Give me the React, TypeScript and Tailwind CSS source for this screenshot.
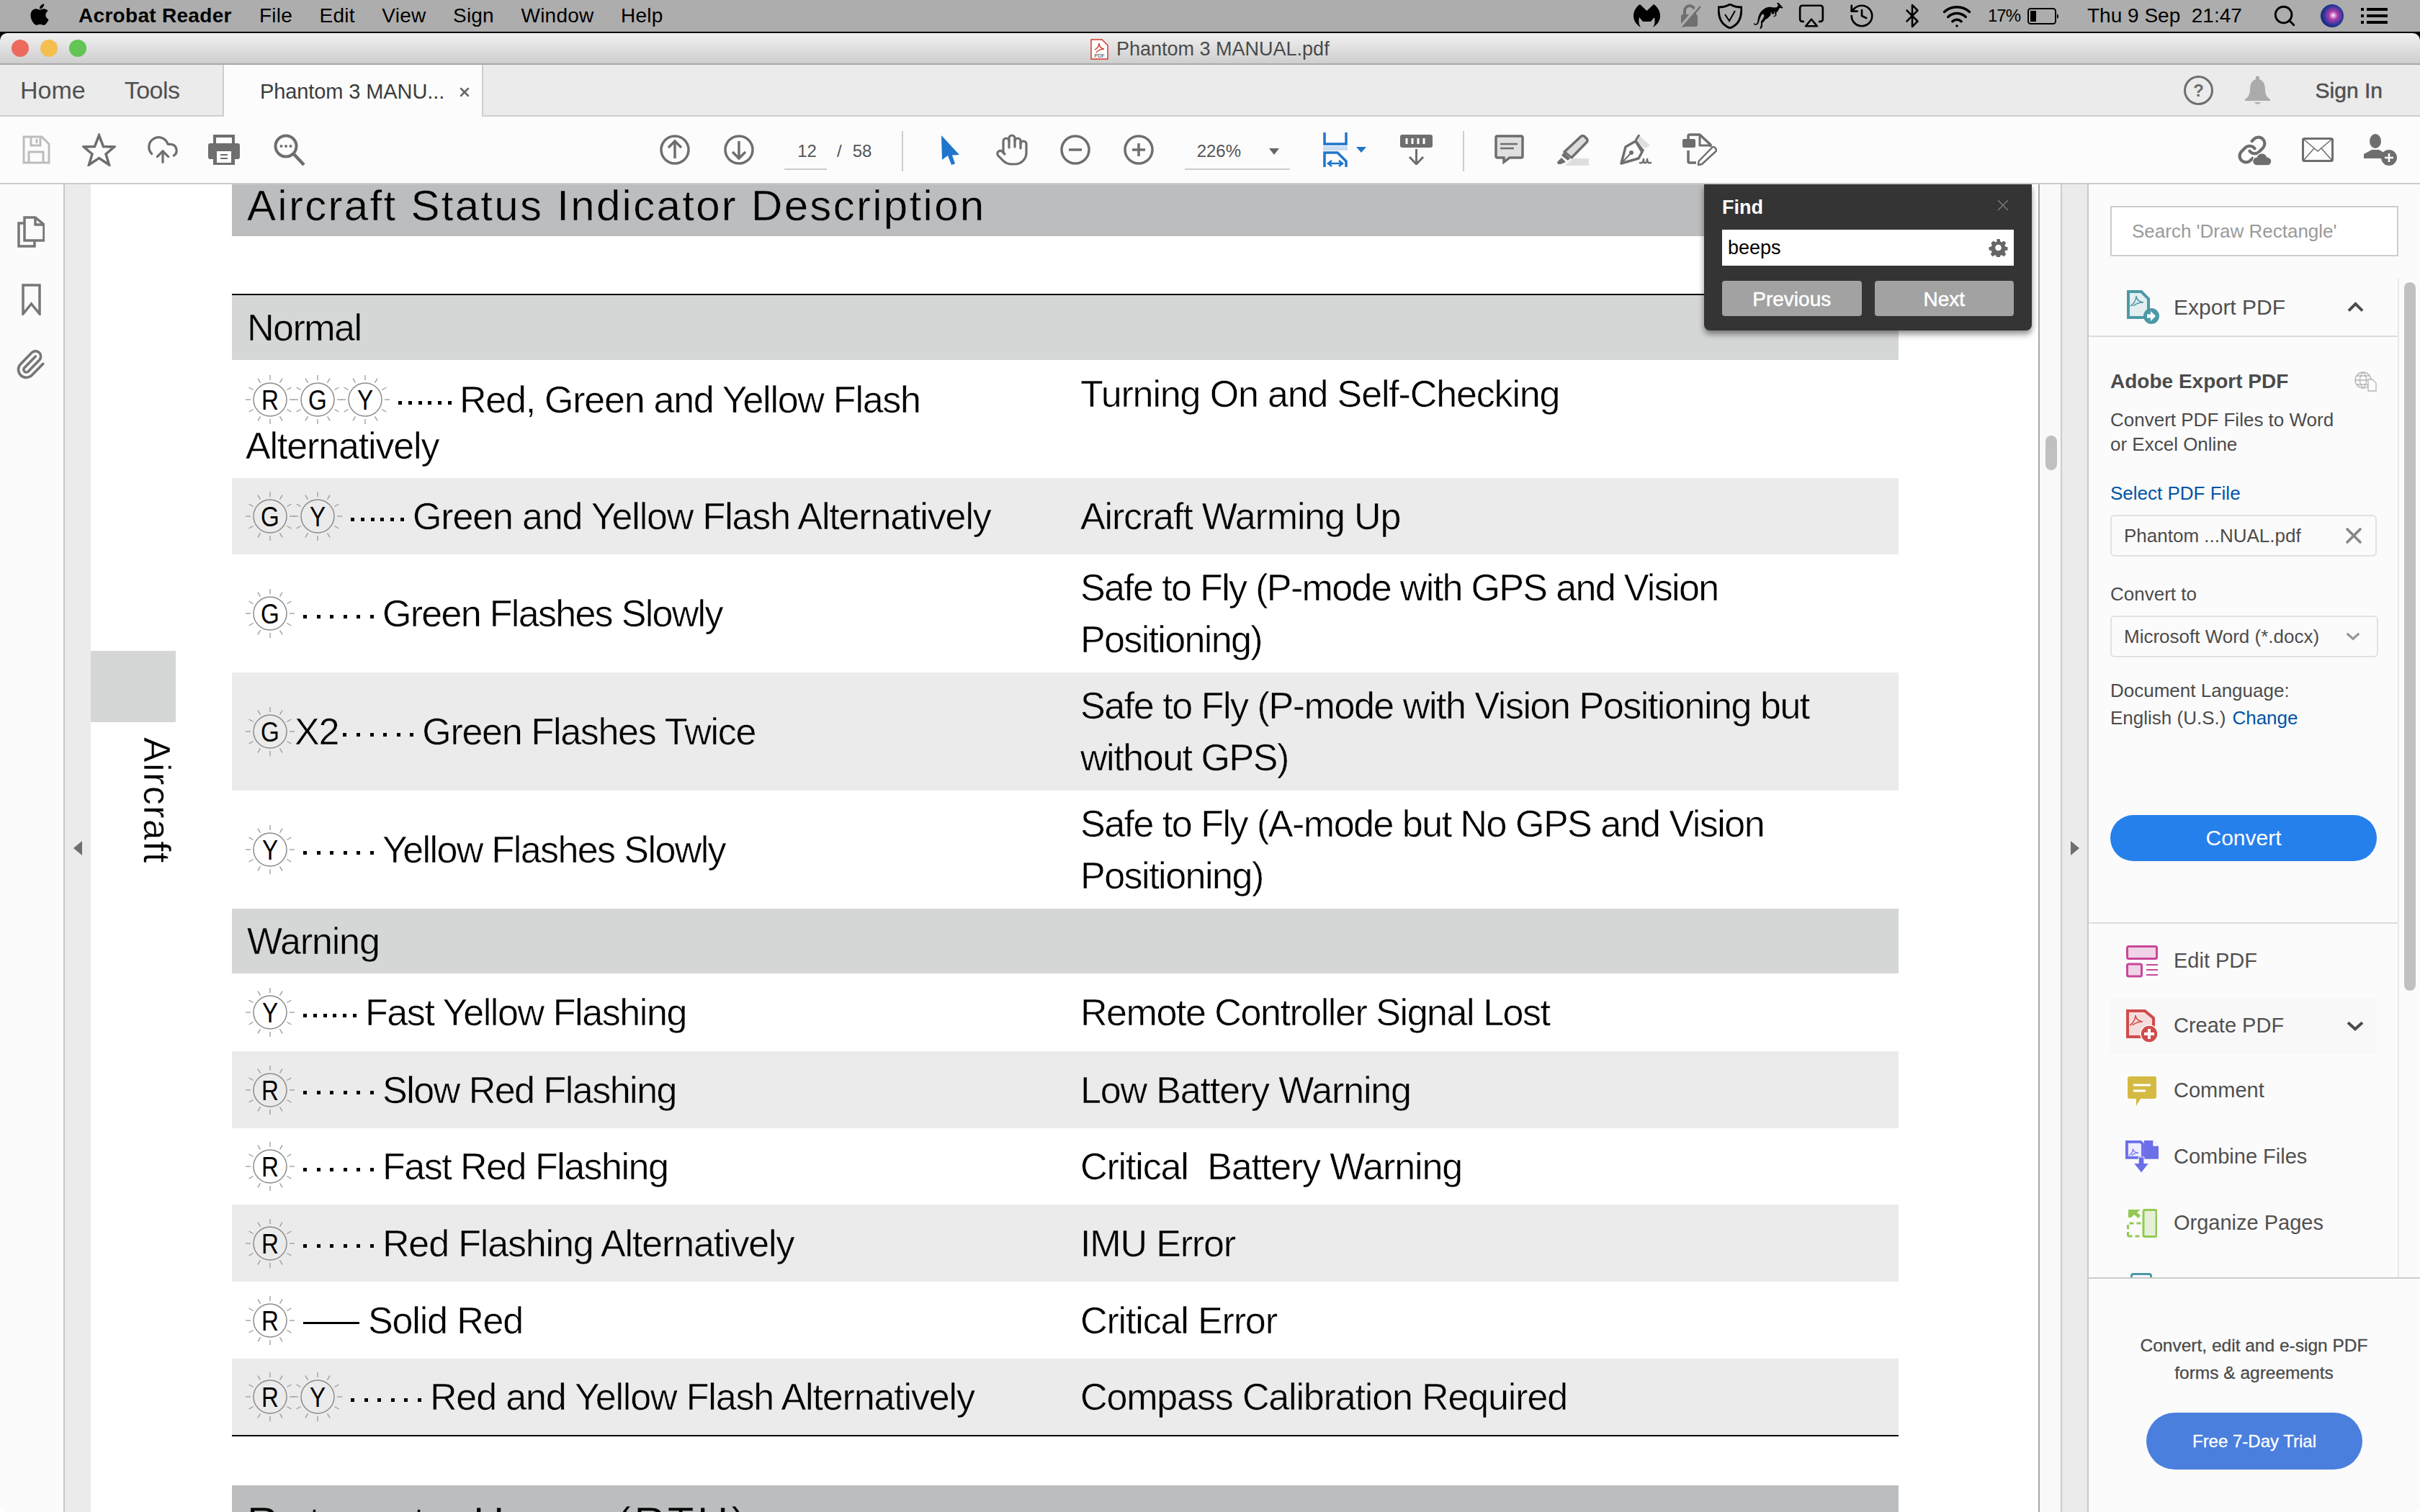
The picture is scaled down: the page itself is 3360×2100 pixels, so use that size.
import React from 'react';
import { Airplay, Bluetooth, CloudUpload, Hand, History, Link, Paperclip, Search, Wifi, X } from 'lucide-react';
import { FaApple } from 'react-icons/fa';
import { GiKangaroo } from 'react-icons/gi';

const G = '#6e6e6e';

// toolbar icons
const SaveIcon = () => (
  <svg width="40" height="40" viewBox="0 0 40 40" fill="none" stroke="#bdbdbd" strokeWidth="3">
    <path d="M3 2h25l10 10v26H3z" />
    <path d="M13 2v12h13V2M21 5v6M10 38V23h20v15" />
  </svg>
);
const StarIcon = () => (
  <svg width="47" height="46" viewBox="0 0 47 46" fill="none" stroke={G} strokeWidth="3.5" strokeLinejoin="miter">
    <path d="M23.5 3l6 15.5 15 .5-11.5 10 4.500 15-14-9.500-14 9.500 4.500-15-11.500-10 15-.5z" />
  </svg>
);
const PrintIcon = () => (
  <svg width="44" height="42" viewBox="0 0 44 42" fill="none">
    <path d="M9 12V2h26v10" stroke={G} strokeWidth="4" />
    <path d="M3 12h38a3 3 0 0 1 3 3v16a3 3 0 0 1-3 3h-4v8H7v-8H3a3 3 0 0 1-3-3V15a3 3 0 0 1 3-3z" fill={G} />
    <rect x="12" y="23" width="20" height="16" fill="#fcfcfc" />
    <path d="M17 28h10M17 33h10" stroke={G} strokeWidth="2" />
  </svg>
);
const FindIcon = () => (
  <svg width="44" height="44" viewBox="0 0 44 44" fill="none" stroke={G}>
    <circle cx="17" cy="17" r="14.500" strokeWidth="4" />
    <path d="M27 27l15 16" strokeWidth="4.500" />
    <circle cx="10.500" cy="17" r="2" fill={G} stroke="none" />
    <circle cx="17" cy="17" r="2" fill={G} stroke="none" />
    <circle cx="23.500" cy="17" r="2" fill={G} stroke="none" />
  </svg>
);
const CircleIcon = ({ d }: { d: string }) => (
  <svg width="42" height="42" viewBox="0 0 42 42" fill="none" stroke={G}>
    <circle cx="21" cy="21" r="19" strokeWidth="3.500" />
    <path d={d} strokeWidth="3.500" />
  </svg>
);
const ArrowIcon = () => (
  <svg width="25" height="41" viewBox="0 0 25 41">
    <path d="M0 0l25 27-10 .5 4 12-5 1.500-5-13-8 6z" fill="#1f75cb" />
  </svg>
);
const FitIcon = () => (
  <svg width="34" height="48" viewBox="0 0 34 48" fill="none" stroke="#1f75cb" strokeWidth="3.500">
    <path d="M2 0v16h30V0" />
    <rect x="0" y="19" width="34" height="6" fill="#c9dcf2" stroke="none" />
    <path d="M2 48V28h18l12 12v8" />
    <path d="M8 43h18M12 39l-5 4 5 4M22 39l5 4-5 4" strokeWidth="2.500" />
  </svg>
);
const MeasureIcon = () => (
  <svg width="45" height="42" viewBox="0 0 45 42" fill="none">
    <rect width="45" height="18" rx="3" fill={G} />
    <path d="M9 5v8M17 5v8M25 5v8M33 5v8" stroke="#fff" strokeWidth="3" />
    <path d="M22.500 20v21M13 31l9.500 10 9.500-10" stroke={G} strokeWidth="3" />
  </svg>
);
const CommentIcon = () => (
  <svg width="41" height="42" viewBox="0 0 41 42">
    <path d="M4 2h33a2 2 0 0 1 2 2v26a2 2 0 0 1-2 2H21l-8 6v-6H4a2 2 0 0 1-2-2V4a2 2 0 0 1 2-2z" fill="#e0e0e0" stroke={G} strokeWidth="3.500" />
    <path d="M8 13h24M8 19h19" stroke={G} strokeWidth="2.500" />
  </svg>
);
const HighlightIcon = () => (
  <svg width="45" height="44" viewBox="0 0 45 44">
    <path d="M12 44l11-10h22v10z" fill="#dedede" />
    <path d="M34 3.500a3.500 3.500 0 0 1 5 0l3 3a3.500 3.500 0 0 1 0 5L21 33l-10-8z" fill="#dcdcdc" stroke={G} strokeWidth="3.500" strokeLinejoin="round" />
    <path d="M10 26l9 8-3 3-9-7z" fill={G} />
    <path d="M1 39l6-6 6 6-7 3H2z" fill={G} />
  </svg>
);
const SignIcon = () => (
  <svg width="46" height="43" viewBox="0 0 46 43" fill="none" stroke={G} strokeWidth="3.500" strokeLinejoin="round">
    <path d="M27 1l15 14-7 4-14-12z" fill="#dedede" stroke="none" />
    <path d="M27 0l-5 8" strokeWidth="3" />
    <path d="M2 40L8 17l14-8 9 15-5 9z" />
    <path d="M22 9l11 14" />
    <circle cx="16" cy="25" r="3" fill={G} stroke="none" />
    <path d="M2 40l14-15" strokeWidth="2" />
    <path d="M28 39c3 1 5-1 5-5 0 4 0 6 3 5 2-1 2-3 2-5 0 4 1 6 5 5" strokeWidth="2.500" strokeLinecap="round" />
  </svg>
);
const EditDocIcon = () => (
  <svg width="48" height="46" viewBox="0 0 48 46" fill="none" stroke={G} strokeWidth="3.500" strokeLinejoin="round">
    <rect x="0" y="8" width="18" height="12" rx="2" fill={G} stroke="none" />
    <path d="M8 8V4a2 2 0 0 1 2-2h14l15 14v3" />
    <path d="M24 2v15h15" strokeWidth="3" />
    <path d="M8 24v15a2 2 0 0 0 2 2h9" />
    <path d="M41 20a2.500 2.500 0 0 1 4 0l1.500 2a2.500 2.500 0 0 1 0 3L27 43l-5 1 .5-5z" strokeWidth="2.500" />
  </svg>
);
const LinkCloudIcon = () => (
  <div className="relative w-[48px] h-[43px]">
    <Link size={42} strokeWidth={2.400} color={G} className="absolute left-0 top-0" />
    <svg className="absolute right-0 bottom-0" width="26" height="20" viewBox="0 0 26 20">
      <path d="M6 20a6 6 0 0 1-1-12 8 8 0 0 1 15 0 6 6 0 0 1 0 12z" fill={G} stroke="#fcfcfc" strokeWidth="1.500" />
    </svg>
  </div>
);
const MailIcon = () => (
  <svg width="44" height="34" viewBox="0 0 44 34" fill="none" stroke={G}>
    <rect x="1.500" y="1.500" width="41" height="31" rx="2" strokeWidth="3" />
    <path d="M2 2l20 17L42 2M2 32l15-17M42 32L27 15" strokeWidth="1.500" />
  </svg>
);
const UserPlusIcon = () => (
  <svg width="47" height="45" viewBox="0 0 47 45">
    <ellipse cx="16" cy="10" rx="8" ry="10" fill={G} />
    <path d="M0 34v-6l11-6h10l9 5v7z" fill={G} />
    <circle cx="35" cy="33" r="11" fill={G} />
    <path d="M35 27v12M29 33h12" stroke="#fff" strokeWidth="2.500" />
  </svg>
);

// menu bar icons
const MalwareIcon = () => (
  <svg width="37" height="32" viewBox="0 0 37 32">
    <path d="M9 0l9.500 9L28 0c6 4 9 10 9 16 0 7-4 12-10 16 3-5 3-9 2-14l-5 6h-11l-5-6c-1 5-1 9 2 14C4 28 0 23 0 16 0 10 3 4 9 0z" fill="#000" />
  </svg>
);
const LockOffIcon = () => (
  <svg width="31" height="32" viewBox="0 0 31 32" fill="none">
    <rect x="3" y="14" width="23" height="17" rx="3" fill="#6f6f6f" />
    <path d="M8 14V9a7 7 0 0 1 14 0v5" stroke="#6f6f6f" strokeWidth="4" />
    <path d="M29 1L3 31" stroke="#adadad" strokeWidth="5" />
    <path d="M30 3L5 32" stroke="#6f6f6f" strokeWidth="2.500" />
  </svg>
);
const ShieldIcon = () => (
  <svg width="34" height="35" viewBox="0 0 34 35" fill="none" stroke="#000" strokeWidth="2">
    <path d="M17 1c5 3 10 4 16 4 0 14-3 24-16 29C4 29 1 19 1 5c6 0 11-1 16-4z" strokeWidth="3" />
    <path d="M10 15l6 9 8-14" />
  </svg>
);
const BatteryIcon = () => (
  <svg width="44" height="23" viewBox="0 0 44 23" fill="none">
    <rect x="1" y="1" width="38" height="21" rx="3.500" stroke="#000" strokeWidth="2" />
    <rect x="4" y="4" width="8" height="15" fill="#000" />
    <path d="M41 8a4 4 0 0 1 0 7z" fill="#000" />
  </svg>
);
const SiriIcon = () => (
  <div className="w-[32px] h-[32px] rounded-full bg-[radial-gradient(circle_at_55%_48%,#f2f2ff_0%,#b43ca8_24%,#27379c_56%,#070a24_100%)]" />
);
const ListIcon = () => (
  <svg width="37" height="22" viewBox="0 0 37 22" fill="#000">
    <rect x="0" y="0" width="4" height="4" />
    <rect x="0" y="9" width="4" height="4" />
    <rect x="0" y="18" width="4" height="4" />
    <rect x="8" y="0" width="29" height="4" />
    <rect x="8" y="9" width="29" height="4" />
    <rect x="8" y="18" width="29" height="4" />
  </svg>
);
const PdfFileIcon = () => (
  <svg width="25" height="29" viewBox="0 0 25 29" fill="#fff" stroke="#d8372c">
    <path d="M1 1h15l8 8v19H1z" strokeWidth="1.500" />
    <path d="M6 15c3-1 6-5 6-9 0 4 3 8 7 8-4 0-9 2-11 5" fill="none" strokeWidth="1.500" />
    <text x="12.500" y="26" textAnchor="middle" fontSize="7" stroke="none" fill="#333" fontFamily="Liberation Sans">PDF</text>
  </svg>
);

// side panel icons
const Squiggle = ({ c }: { c: string }) => (
  <path d="M5 22c4-2 8-8 8-14 0 5 5 9 10 9-5 0-10 1-14 5" fill="none" stroke={c} strokeWidth="1.500" />
);
const ExportIcon = () => (
  <svg width="45" height="47" viewBox="0 0 45 47">
    <path d="M2 2h18l10 10v26H2z" fill="#e3eef0" stroke="#4c99a6" strokeWidth="4" />
    <Squiggle c="#4c99a6" />
    <circle cx="34" cy="36" r="11" fill="#4c99a6" />
    <path d="M28 33.500h5V29l7 7-7 7v-4.500h-5z" fill="#fff" />
  </svg>
);
const EditIcon = () => (
  <svg width="44" height="45" viewBox="0 0 44 45" fill="none" stroke="#c8479b" strokeWidth="3">
    <rect x="1.500" y="1.500" width="41" height="17" rx="2" fill="#f0d3e6" />
    <rect x="1.500" y="26" width="20" height="17" rx="2" fill="#f0d3e6" />
    <path d="M28 27h16M28 34h16M28 41h16" strokeWidth="2" />
  </svg>
);
const CreateIcon = () => (
  <svg width="44" height="46" viewBox="0 0 44 46">
    <path d="M2 2h24l12 10v26H2z" fill="#f5dddd" stroke="#d14b4b" strokeWidth="4" />
    <Squiggle c="#d14b4b" />
    <circle cx="32" cy="34" r="12" fill="#d14b4b" stroke="#fbfbfb" strokeWidth="1.500" />
    <path d="M32 27v14M25 34h14" stroke="#fff" strokeWidth="4" />
  </svg>
);
const NoteIcon = () => (
  <svg width="40" height="41" viewBox="0 0 40 41">
    <path d="M3 0h34a3 3 0 0 1 3 3v25a3 3 0 0 1-3 3H18l-6 10V31H3a3 3 0 0 1-3-3V3a3 3 0 0 1 3-3z" fill="#d4ba42" />
    <path d="M8 12h24M8 20h17" stroke="#fff" strokeWidth="3" />
  </svg>
);
const CombineIcon = () => (
  <svg width="48" height="47" viewBox="0 0 48 47">
    <path d="M2 2h20l3 3v20H2z" fill="#eef" stroke="#6b6fe8" strokeWidth="4" />
    <path d="M5 22c3-2 6-5 6-10 0 4 4 6 8 6-4 0-7 1-10 4" fill="none" stroke="#6b6fe8" strokeWidth="1.300" />
    <path d="M27 0h13l8 8v19H27z" fill="#6b6fe8" />
    <path d="M40 0l8 8h-8z" fill="#fbfbfb" />
    <path d="M19 24h8v9h7l-11 14-11-14h7z" fill="#6b6fe8" stroke="#fbfbfb" strokeWidth="1" />
  </svg>
);
const OrganizeIcon = () => (
  <svg width="42" height="40" viewBox="0 0 42 40" fill="none">
    <rect x="23" y="1.500" width="18" height="37" rx="2" fill="#e6f0d8" stroke="#93c955" strokeWidth="3" />
    <path d="M1.500 38v-18h18M1.500 38h18" stroke="#93c955" strokeWidth="3" strokeDasharray="6 4" />
    <path d="M2 1h17l-5 4 5 4-3 4-6-5-4 4H2z" fill="#93c955" />
  </svg>
);
const GlobeDocIcon = () => (
  <svg width="31" height="28" viewBox="0 0 31 28" fill="none" stroke="#b5b5b5" strokeWidth="1.300">
    <circle cx="12" cy="12" r="11" />
    <path d="M1 12h22M12 1c-6 6-6 16 0 22M12 1c6 6 6 16 0 22M3 6h18M3 18h18" />
    <path d="M19 11h6l5 5v11H19z" fill="#fbfbfb" />
  </svg>
);
const GearIcon = () => (
  <svg width="29" height="26" viewBox="0 0 24 24" fill="#666">
    <path d="M10 1h4l.6 3.200 1.900.8 2.700-1.800 2.800 2.800-1.800 2.700.8 1.900 3 .6v4l-3 .6-.8 1.900 1.800 2.700-2.800 2.800-2.700-1.800-1.900.8-.6 3h-4l-.6-3-1.900-.8-2.700 1.800-2.800-2.800 1.800-2.700-.8-1.900-3-.6v-4l3-.6.8-1.900L2.800 6l2.800-2.800 2.700 1.800 1.900-.8zM12 8a4 4 0 1 0 0 8 4 4 0 0 0 0-8z" fillRule="evenodd" />
  </svg>
);
const Chevron = ({ up, color, w }: { up?: boolean; color: string; w: number }) => (
  <svg width={w} height={w * 0.6} viewBox="0 0 24 14" fill="none" stroke={color} strokeWidth="4">
    <path d={up ? 'M2 13L12 3l10 10' : 'M2 2l10 9 10-9'} />
  </svg>
);

// status light with rays, as printed in the manual
const Led = ({ letter }: { letter: string }) => (
  <svg width="68" height="68" viewBox="0 0 68 68" className="shrink-0 -mr-[2px]">
    {Array.from({ length: 12 }).map((_, i) => {
      const a = (i * Math.PI) / 6;
      return (
        <line key={i} x1={34 + 27 * Math.cos(a)} y1={34 + 27 * Math.sin(a)} x2={34 + 34 * Math.cos(a)} y2={34 + 34 * Math.sin(a)} stroke="#9a9a9a" strokeWidth="1.300" />
      );
    })}
    <circle cx="34" cy="34" r="23" fill="none" stroke="#8c8c8c" strokeWidth="1.500" />
    <text transform="translate(34 48) scale(0.85 1)" textAnchor="middle" fontSize="39" fontFamily="Liberation Sans" fontWeight="400" fill="#000">{letter}</text>
  </svg>
);

const Dots = ({ wide }: { wide?: boolean }) => (
  <div className={`flex shrink-0 ml-[14px] mt-[8px] mr-[12px] ${wide ? 'gap-[13.600px]' : 'gap-[8.800px]'}`}>
    {[0, 1, 2, 3, 4, 5].map((i) => (
      <div key={i} className="w-[5px] h-[5px] bg-black" />
    ))}
  </div>
);

const thin = "font-['Liberation_Sans',sans-serif] text-[52px] leading-[72px] text-black";
const baseTrack = 'tracking-[-1.150px]';
const onWhite = '[-webkit-text-stroke:0.5px_#ffffff]';
const onAlt = '[-webkit-text-stroke:0.5px_#ebebeb]';
const onBand = '[-webkit-text-stroke:0.5px_#d5d7d6]';
const onTitle = '[-webkit-text-stroke:0.5px_#bcbdbf]';

interface RowProps {
  h: string;
  alt?: boolean;
  leds: string[];
  mark: 'tight' | 'wide' | 'solid';
  x2?: boolean;
  label: string;
  right: string[];
  labelTrack?: string;
  rightTrack?: string;
}

function Row({ h, alt, leds, mark, x2, label, right, labelTrack = baseTrack, rightTrack = baseTrack }: RowProps) {
  const stroke = alt ? onAlt : onWhite;
  return (
    <div className={`flex items-center ${h} ${alt ? 'bg-[#ebebeb]' : ''}`}>
      <div className="w-[1178px] pl-[19px] flex items-center">
        {leds.map((l, i) => (
          <Led key={i} letter={l} />
        ))}
        {x2 && <span className={`${thin} ${baseTrack} ${stroke} ml-[2px] -mr-[8px]`}>X2</span>}
        {mark === 'solid' ? <div className="w-[78px] h-[3px] bg-black ml-[14px] mr-[12px] mt-[8px]" /> : <Dots wide={mark === 'wide'} />}
        <span className={`${thin} ${labelTrack} ${stroke}`}>{label}</span>
      </div>
      <div className={`${thin} ${rightTrack} ${stroke} whitespace-pre`}>
        {right.map((r) => (
          <div key={r}>{r}</div>
        ))}
      </div>
    </div>
  );
}

const menuItems = [
  { label: 'Edit PDF', h: 'h-[90px]', icon: <EditIcon /> },
  { label: 'Create PDF', h: 'h-[90px]', icon: <CreateIcon />, hover: true },
  { label: 'Comment', h: 'h-[90px]', icon: <NoteIcon /> },
  { label: 'Combine Files', h: 'h-[93px]', icon: <CombineIcon /> },
  { label: 'Organize Pages', h: 'h-[91px]', icon: <OrganizeIcon /> },
];

export default function App() {
  return (
    <div className="relative w-[3360px] h-[2100px] overflow-hidden bg-black flex flex-col font-['Liberation_Sans',Arial,sans-serif] text-[#4b4b4b]">
      {/* mac menu bar */}
      <div className="h-[44px] shrink-0 bg-[#adadad] flex items-center text-[28px] text-black">
        <FaApple size={34} className="ml-[38px] -mt-[4px]" />
        <span className="ml-[37px] font-bold w-[214px] whitespace-nowrap tracking-[0.3px]">Acrobat Reader</span>
        <div className="flex gap-[37.700px] ml-[37px] tracking-[0.2px]">
          {['File', 'Edit', 'View', 'Sign', 'Window', 'Help'].map((m) => (
            <span key={m}>{m}</span>
          ))}
        </div>
        <div className="ml-auto flex items-center pr-[45px]">
          <MalwareIcon />
          <div className="ml-[26px]"><LockOffIcon /></div>
          <div className="ml-[23px]"><ShieldIcon /></div>
          <GiKangaroo size={44} className="ml-[14px]" />
          <Airplay size={38} strokeWidth={1.700} className="ml-[19px]" />
          <History size={38} strokeWidth={1.700} className="ml-[32px]" />
          <Bluetooth size={36} strokeWidth={1.700} className="ml-[33px]" />
          <Wifi size={42} strokeWidth={2} className="ml-[23px]" />
          <span className="ml-[22px] text-[24px] tracking-[-1px]">17%</span>
          <div className="ml-[10px]"><BatteryIcon /></div>
          <span className="ml-[39px] w-[217px]">Thu 9 Sep&nbsp; 21:47</span>
          <Search size={34} strokeWidth={2} className="ml-[40px]" />
          <div className="ml-[33px]"><SiriIcon /></div>
          <div className="ml-[24px]"><ListIcon /></div>
        </div>
      </div>
      <div className="h-[2px] shrink-0 bg-black" />

      {/* window title */}
      <div className="relative h-[44px] shrink-0 rounded-t-[10px] border-b-2 border-[#a9a9a9] bg-gradient-to-b from-[#f1f1f1] to-[#cecece] flex items-center">
        <div className="flex gap-[16px] ml-[16px]">
          <div className="w-[24px] h-[24px] rounded-full bg-[#ec6a5e]" />
          <div className="w-[24px] h-[24px] rounded-full bg-[#f5bf4f]" />
          <div className="w-[24px] h-[24px] rounded-full bg-[#62c554]" />
        </div>
        <div className="ml-[1394px] flex items-center gap-[11px] text-[27px] text-[#4a4a4a] pt-[2px]">
          <PdfFileIcon />
          <span>Phantom 3 MANUAL.pdf</span>
        </div>
      </div>

      {/* tab bar */}
      <div className="h-[72px] shrink-0 bg-[#ebebeb] border-b-2 border-[#cecece] flex items-start">
        <div className="w-[309px] h-[70px] flex items-center gap-[54px] pl-[28px] text-[34px] text-[#505050]">
          <span>Home</span>
          <span className="tracking-[-0.5px]">Tools</span>
        </div>
        <div className="w-[362px] h-[72px] bg-[#fcfcfc] border-x-2 border-[#cecece] flex items-center pl-[50px] pt-[4px] text-[29px] text-[#3c3c3c] z-10">
          <span className="w-[274px] tracking-[-0.1px]">Phantom 3 MANU...</span>
          <X size={20} strokeWidth={3} color="#666" />
        </div>
        <div className="ml-auto h-[70px] flex items-center pr-[52px]">
          <svg width="41" height="41" viewBox="0 0 41 41" fill="none">
            <circle cx="20.500" cy="20.500" r="19" stroke={G} strokeWidth="3" />
            <text x="20.500" y="29" textAnchor="middle" fontSize="24" fontWeight="700" fill={G} fontFamily="Liberation Sans">?</text>
          </svg>
          <svg width="35" height="39" viewBox="0 0 35 39" className="ml-[44px]" fill="#ababab">
            <path d="M15 0h5v4c6 2 8 8 8 14 0 6 2 11 7 14v2H0v-2c5-3 7-8 7-14 0-6 2-12 8-14z" />
            <path d="M12 36h11l-5.500 3z" />
          </svg>
          <span className="ml-[63px] text-[30px] text-[#505050] [-webkit-text-stroke:0.5px_#505050]">Sign In</span>
        </div>
      </div>

      {/* toolbar */}
      <div className="h-[94px] shrink-0 bg-[#fcfcfc] border-b-2 border-[#cccccc] flex items-center pl-[30px] pr-[31px]">
        <SaveIcon />
        <div className="ml-[44px]"><StarIcon /></div>
        <CloudUpload size={46} strokeWidth={1.700} color={G} className="ml-[42px]" />
        <div className="ml-[40px]"><PrintIcon /></div>
        <div className="ml-[47px]"><FindIcon /></div>
        <div className="ml-[492px]"><CircleIcon d="M21 33V10M12 18l9-9 9 9" /></div>
        <div className="ml-[47px]"><CircleIcon d="M21 9v23M12 24l9 9 9-9" /></div>
        <div className="ml-[42px] w-[59px] h-[50px] mt-[6px] border-b-2 border-[#cccccc] flex items-center justify-center pl-[4px] text-[24px] text-[#555]">12</div>
        <span className="ml-[14px] mt-[4px] text-[24px] text-[#555]">/</span>
        <span className="ml-[15px] mt-[4px] text-[24px] text-[#555] w-[26px]">58</span>
        <div className="ml-[42px] w-[2px] h-[56px] bg-[#cccccc] mt-[4px]" />
        <div className="ml-[53px]"><ArrowIcon /></div>
        <Hand size={48} strokeWidth={1.600} color={G} className="ml-[49px]" />
        <div className="ml-[43px]"><CircleIcon d="M12 21h18" /></div>
        <div className="ml-[46px]"><CircleIcon d="M12 21h18M21 12v18" /></div>
        <div className="ml-[43px] w-[146px] h-[50px] mt-[6px] border-b-2 border-[#cccccc] flex items-center pl-[17px] text-[24px] text-[#555]">
          <span className="w-[100px]">226%</span>
          <div className="w-0 h-0 border-x-[7px] border-x-transparent border-t-[9px] border-t-[#666]" />
        </div>
        <div className="ml-[46px]"><FitIcon /></div>
        <div className="ml-[12px] w-0 h-0 border-x-[7px] border-x-transparent border-t-[8px] border-t-[#1f75cb]" />
        <div className="ml-[47px]"><MeasureIcon /></div>
        <div className="ml-[42px] w-[2px] h-[56px] bg-[#cccccc] mt-[4px]" />
        <div className="ml-[42px]"><CommentIcon /></div>
        <div className="ml-[45px]"><HighlightIcon /></div>
        <div className="ml-[43px]"><SignIcon /></div>
        <div className="ml-[41px]"><EditDocIcon /></div>
        <div className="ml-auto"><LinkCloudIcon /></div>
        <div className="ml-[42px]"><MailIcon /></div>
        <div className="ml-[42px]"><UserPlusIcon /></div>
      </div>

      <div className="flex-1 flex min-h-0 bg-white">
        {/* left rail */}
        <div className="w-[90px] shrink-0 border-r-2 border-[#c8c8c8] bg-[#fbfbfb] rounded-bl-[10px] flex flex-col items-center pt-[44px] pr-[2px]">
          <svg width="38" height="44" viewBox="0 0 38 44" fill="none" stroke="#777" strokeWidth="3.500">
            <path d="M10 34V2h15l12 10v22z" />
            <path d="M25 2v10h12" />
            <path d="M10 10H2v32h22v-8" />
          </svg>
          <svg width="27" height="44" viewBox="0 0 27 44" className="mt-[50px]" fill="none" stroke="#777" strokeWidth="3.500">
            <path d="M2 2h23v40L13.500 28 2 42z" />
          </svg>
          <Paperclip size={44} strokeWidth={2} color="#777" className="mt-[46px] -ml-[2px]" />
        </div>
        {/* gutter */}
        <div className="w-[36px] shrink-0 bg-[#ebebeb] flex items-center justify-center">
          <div className="w-0 h-0 border-y-[10px] border-y-transparent border-r-[12px] border-r-[#6e6e6e]" />
        </div>

        {/* pdf page */}
        <div className="relative w-[2704px] shrink-0 bg-white flex overflow-hidden">
          <div className="w-[196px] shrink-0 pt-[648px]">
            <div className="w-[118px] h-[99px] bg-[#d5d7d6]" />
            <div className={`mt-[21px] ml-[62px] [writing-mode:vertical-rl] text-[52px] leading-[60px] tracking-[1.400px] text-black ${onWhite}`}>Aircraft</div>
          </div>
          <div className="w-[2314px] shrink-0">
            <div className={`h-[72px] bg-[#bcbdbf] pl-[21px] pb-[12px] flex items-center text-[60px] leading-[60px] tracking-[2.300px] text-black ${onTitle}`}>Aircraft Status Indicator Description</div>
            <div className="h-[80px]" />
            <div className="h-[2px] bg-black" />
            <div className={`h-[90px] bg-[#d5d7d6] pl-[21px] flex items-center ${thin} tracking-[-1.500px] ${onBand}`}>Normal</div>

            {/* first row wraps on two lines */}
            <div className="h-[164px] flex">
              <div className="w-[1178px] pl-[19px] pt-[19px]">
                <div className="flex items-center">
                  <Led letter="R" />
                  <Led letter="G" />
                  <Led letter="Y" />
                  <Dots />
                  <span className={`${thin} tracking-[-1.250px] ${onWhite} -ml-[1px]`}>Red, Green and Yellow Flash</span>
                </div>
                <div className={`${thin} ${baseTrack} ${onWhite} -mt-[8px] leading-[66px]`}>Alternatively</div>
              </div>
              <div className={`${thin} ${baseTrack} ${onWhite} pt-[11px]`}>Turning On and Self-Checking</div>
            </div>
            <Row h="h-[106px]" alt leds={['G', 'Y']} mark="tight" label="Green and Yellow Flash Alternatively" right={['Aircraft Warming Up']} />
            <Row h="h-[164px]" leds={['G']} mark="wide" label="Green Flashes Slowly" labelTrack="tracking-[-1.700px]" right={['Safe to Fly (P-mode with GPS and Vision', 'Positioning)']} rightTrack="tracking-[-1.650px]" />
            <Row h="h-[164px]" alt leds={['G']} x2 mark="wide" label="Green Flashes Twice" labelTrack="tracking-[-1.300px]" right={['Safe to Fly (P-mode with Vision Positioning but', 'without GPS)']} rightTrack="tracking-[-1.450px]" />
            <Row h="h-[164px]" leds={['Y']} mark="wide" label="Yellow Flashes Slowly" labelTrack="tracking-[-1.600px]" right={['Safe to Fly (A-mode but No GPS and Vision', 'Positioning)']} rightTrack="tracking-[-1.500px]" />
            <div className={`h-[90px] bg-[#d5d7d6] pl-[21px] flex items-center ${thin} ${baseTrack} ${onBand}`}>Warning</div>
            <Row h="h-[108px]" leds={['Y']} mark="tight" label="Fast Yellow Flashing" labelTrack="tracking-[-1.400px]" right={['Remote Controller Signal Lost']} rightTrack="tracking-[-1.450px]" />
            <Row h="h-[107px]" alt leds={['R']} mark="wide" label="Slow Red Flashing" labelTrack="tracking-[-1.500px]" right={['Low Battery Warning']} />
            <Row h="h-[106px]" leds={['R']} mark="wide" label="Fast Red Flashing" labelTrack="tracking-[-1.500px]" right={['Critical  Battery Warning']} />
            <Row h="h-[107px]" alt leds={['R']} mark="wide" label="Red Flashing Alternatively" right={['IMU Error']} />
            <Row h="h-[107px]" leds={['R']} mark="solid" label="Solid Red" right={['Critical Error']} />
            <Row h="h-[106px]" alt leds={['R', 'Y']} mark="wide" label="Red and Yellow Flash Alternatively" right={['Compass Calibration Required']} />
            <div className="h-[2px] bg-black" />
            <div className="h-[68px]" />
            <div className={`h-[80px] bg-[#bcbdbf] pl-[21px] pt-[16px] text-[60px] leading-[72px] tracking-[4.400px] text-black whitespace-nowrap ${onTitle}`}>Return-to-Home (RTH)</div>
          </div>

          {/* find dialog */}
          <div className="absolute left-[2240px] top-0 w-[455px] h-[203px] bg-[#343434] rounded-b-[8px] shadow-[0_5px_9px_rgba(0,0,0,0.45)] px-[25px] flex flex-col">
            <div className="h-[63px] flex items-center justify-between pt-[1px]">
              <span className="text-[27px] font-bold text-white">Find</span>
              <X size={26} strokeWidth={1.500} color="#777" className="mr-[2px] -mt-[6px]" />
            </div>
            <div className="h-[50px] bg-white flex items-center justify-between pl-[8px] pr-[7px] text-[27px] text-black">
              <span>beeps</span>
              <GearIcon />
            </div>
            <div className="flex gap-[18px] mt-[21px]">
              <div className="flex-1 h-[49px] rounded-[4px] bg-[#a2a2a2] flex items-center justify-center pt-[2px] text-[28px] text-white [-webkit-text-stroke:0.5px_#ffffff]">Previous</div>
              <div className="flex-1 h-[49px] rounded-[4px] bg-[#a2a2a2] flex items-center justify-center pt-[2px] text-[28px] text-white [-webkit-text-stroke:0.5px_#ffffff]">Next</div>
            </div>
          </div>
        </div>

        {/* page scrollbar */}
        <div className="relative w-[33px] shrink-0 bg-[#f9f9f9] border-l-2 border-[#a8a8a8] border-r-2 border-r-[#cccccc]">
          <div className="absolute left-[8px] top-[349px] w-[16px] h-[48px] rounded-[8px] bg-[#c0c0c0]" />
        </div>
        {/* gutter */}
        <div className="w-[35px] shrink-0 bg-[#ebebeb] flex items-center justify-center">
          <div className="w-0 h-0 border-y-[10px] border-y-transparent border-l-[12px] border-l-[#6e6e6e]" />
        </div>

        {/* tools panel */}
        <div className="w-[462px] shrink-0 border-l-2 border-[#c8c8c8] bg-[#fbfbfb] rounded-br-[10px] flex flex-col">
          <div className="h-[130px] shrink-0 pt-[30px] pl-[30px]">
            <div className="w-[400px] h-[70px] border-2 border-[#cccccc] bg-white flex items-center pl-[28px] text-[26px] text-[#9a9a9a]">Search 'Draw Rectangle'</div>
          </div>
          <div className="relative flex-1 min-h-0 overflow-hidden">
            <div className="w-[431px] h-full border-r-2 border-[#e8e8e8] overflow-hidden">
              <div className="h-[82px] border-b-2 border-[#dcdcdc] flex items-center pl-[53px] text-[30px] text-[#505050]">
                <ExportIcon />
                <span className="ml-[20px] w-[241px]">Export PDF</span>
                <Chevron up color="#4b4b4b" w={23} />
              </div>
              <div className="pl-[30px] pr-[29px] pt-[45px] text-[26px] leading-[34px]">
                <div className="flex items-center justify-between text-[28px] font-bold">
                  <span>Adobe Export PDF</span>
                  <GlobeDocIcon />
                </div>
                <div className="mt-[19px]">Convert PDF Files to Word<br />or Excel Online</div>
                <div className="mt-[34px] text-[#0054a6]">Select PDF File</div>
                <div className="mt-[13px] h-[58px] border-2 border-[#e1e1e1] rounded-[6px] flex items-center justify-between pl-[17px] pr-[12px]">
                  <span>Phantom ...NUAL.pdf</span>
                  <X size={36} strokeWidth={2.500} color="#888" />
                </div>
                <div className="mt-[35px]">Convert to</div>
                <div className="mt-[13px] w-[372px] h-[58px] border-2 border-[#e1e1e1] rounded-[6px] flex items-center justify-between pl-[17px] pr-[23px]">
                  <span>Microsoft Word (*.docx)</span>
                  <Chevron color="#999" w={20} />
                </div>
                <div className="mt-[27px] leading-[38px]">
                  Document Language:<br />English (U.S.)<span className="ml-[9px] text-[#0054a6]">Change</span>
                </div>
                <div className="mt-[116px] w-[370px] h-[64px] rounded-full bg-[#2680eb] flex items-center justify-center text-[30px] text-white">Convert</div>
              </div>
              <div className="mt-[85px] h-[2px] bg-[#dddddd]" />
              <div className="mt-[7px]">
                {menuItems.map((m) => (
                  <div key={m.label} className={`${m.h} flex items-center`}>
                    <div className={`ml-[31px] w-[369px] h-[79px] flex items-center pl-[20px] text-[29px] text-[#505050] ${m.hover ? 'bg-[#f8f8f8]' : ''}`}>
                      <div className="w-[46px] flex justify-center">{m.icon}</div>
                      <span className="ml-[21px] flex-1">{m.label}</span>
                      {m.hover && <div className="mr-[18px]"><Chevron color="#4b4b4b" w={24} /></div>}
                    </div>
                  </div>
                ))}
                <div className="ml-[58px] w-[30px] h-[10px] mt-[24px] rounded-t-[4px] border-t-[3px] border-x-[3px] border-[#4c99a6]" />
              </div>
            </div>
            <div className="absolute left-[438px] top-[6px] w-[16px] h-[984px] rounded-[8px] bg-[#c0c0c0]" />
          </div>
          <div className="h-[326px] shrink-0 border-t-2 border-[#cccccc] flex flex-col items-center text-[24.500px] leading-[38px] text-[#4b4b4b] [-webkit-text-stroke:0.3px_#4b4b4b]">
            <div className="mt-[74px] w-[460px] -ml-[1px] text-center">Convert, edit and e-sign PDF<br />forms &amp; agreements</div>
            <div className="mt-[36px] w-[300px] h-[79px] rounded-full bg-[#4a7fde] flex items-center justify-center text-[24px] text-white [-webkit-text-stroke:0.3px_#ffffff]">Free 7-Day Trial</div>
          </div>
        </div>
      </div>
    </div>
  );
}
